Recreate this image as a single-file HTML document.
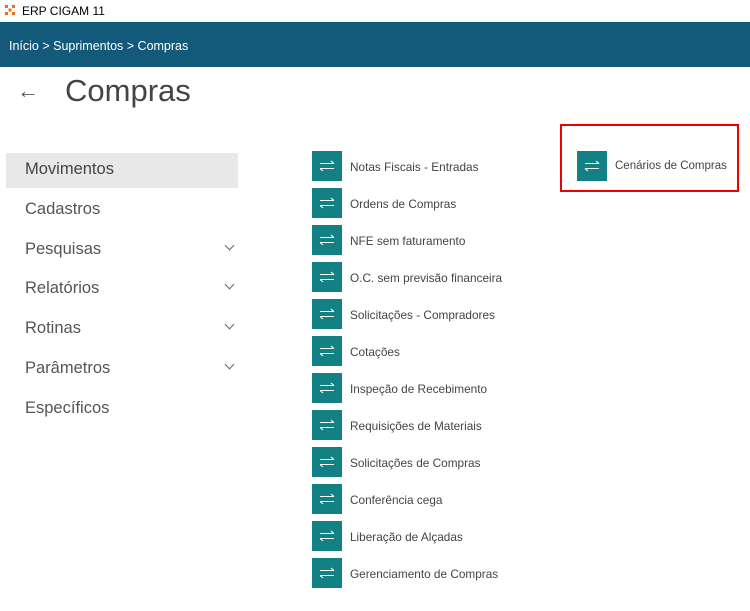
<!DOCTYPE html>
<html><head><meta charset="utf-8"><style>
*{margin:0;padding:0;box-sizing:border-box}
body{width:750px;height:611px;background:#fff;font-family:"Liberation Sans",sans-serif;position:relative;overflow:hidden;color:#333}
.tb{position:absolute;left:0;top:0;width:750px;height:22px;background:#fff}
.tb span{position:absolute;left:22px;top:4px;font-size:12px;color:#000}
.hd{position:absolute;left:0;top:22px;width:750px;height:45px;background:#135a7a}
.hd span{position:absolute;left:9px;top:17px;font-size:12.5px;color:#fff}
.back{position:absolute;left:17px;top:78px;font-size:22px;color:#555}
h1{position:absolute;left:65px;top:73px;font-size:31px;font-weight:normal;color:#444}
.sb{position:absolute;left:25px;font-size:16.5px;color:#555}
.sel{position:absolute;left:6px;top:153px;width:232px;height:35px;background:#e8e8e8}
.chev{position:absolute;left:226px;width:7px;height:7px;border-right:1.3px solid #666;border-bottom:1.3px solid #666;transform:rotate(45deg)}
.it{position:absolute;height:30px}
.ic{position:absolute;left:0;top:0;width:30px;height:30px;background:#138184}
.it span{position:absolute;left:38px;top:9px;font-size:11.8px;color:#444;white-space:nowrap}
.red{position:absolute;left:560px;top:124px;width:179px;height:68px;border:2px solid #e00}
</style></head><body>
<div class="tb"><svg style="position:absolute;left:4px;top:4px" width="12" height="12"><rect width="12" height="12" fill="#fff"/><g fill="#f26a1b"><rect x="1" y="1" width="3" height="3"/><rect x="8" y="1" width="3" height="3"/><rect x="4.5" y="4.5" width="3" height="3"/><rect x="1" y="8" width="3" height="3"/><rect x="8" y="8" width="3" height="3"/></g></svg><span>ERP CIGAM 11</span></div>
<div class="hd"><span>Início &gt; Suprimentos &gt; Compras</span></div>
<div class="back">←</div>
<h1>Compras</h1>
<div class="sel"></div>
<div class="sb" style="top:160px;color:#444">Movimentos</div>
<div class="sb" style="top:200px">Cadastros</div>
<div class="sb" style="top:240px">Pesquisas</div><div class="chev" style="top:242px"></div>
<div class="sb" style="top:279px">Relatórios</div><div class="chev" style="top:281px"></div>
<div class="sb" style="top:319px">Rotinas</div><div class="chev" style="top:321px"></div>
<div class="sb" style="top:359px">Parâmetros</div><div class="chev" style="top:361px"></div>
<div class="sb" style="top:399px">Específicos</div>
<div class="red"></div>
<div id="list"></div>
<script>
var ic='<div class="ic"><svg width="30" height="30" fill="none" stroke="#fff" stroke-width="1.1"><path d="M8 12.5h14M19 10l3 2.5M8 17.5h14M11 20l-3-2.5"/></svg></div>';
var items=["Notas Fiscais - Entradas","Ordens de Compras","NFE sem faturamento","O.C. sem previsão financeira","Solicitações - Compradores","Cotações","Inspeção de Recebimento","Requisições de Materiais","Solicitações de Compras","Conferência cega","Liberação de Alçadas","Gerenciamento de Compras"];
var h='';items.forEach(function(t,i){h+='<div class="it" style="left:312px;top:'+(151+37*i)+'px">'+ic+'<span>'+t+'</span></div>'});
h+='<div class="it" style="left:577px;top:151px">'+ic+'<span style="font-size:11.5px">Cenários de Compras</span></div>';
document.getElementById('list').innerHTML=h;
</script>
</body></html>
